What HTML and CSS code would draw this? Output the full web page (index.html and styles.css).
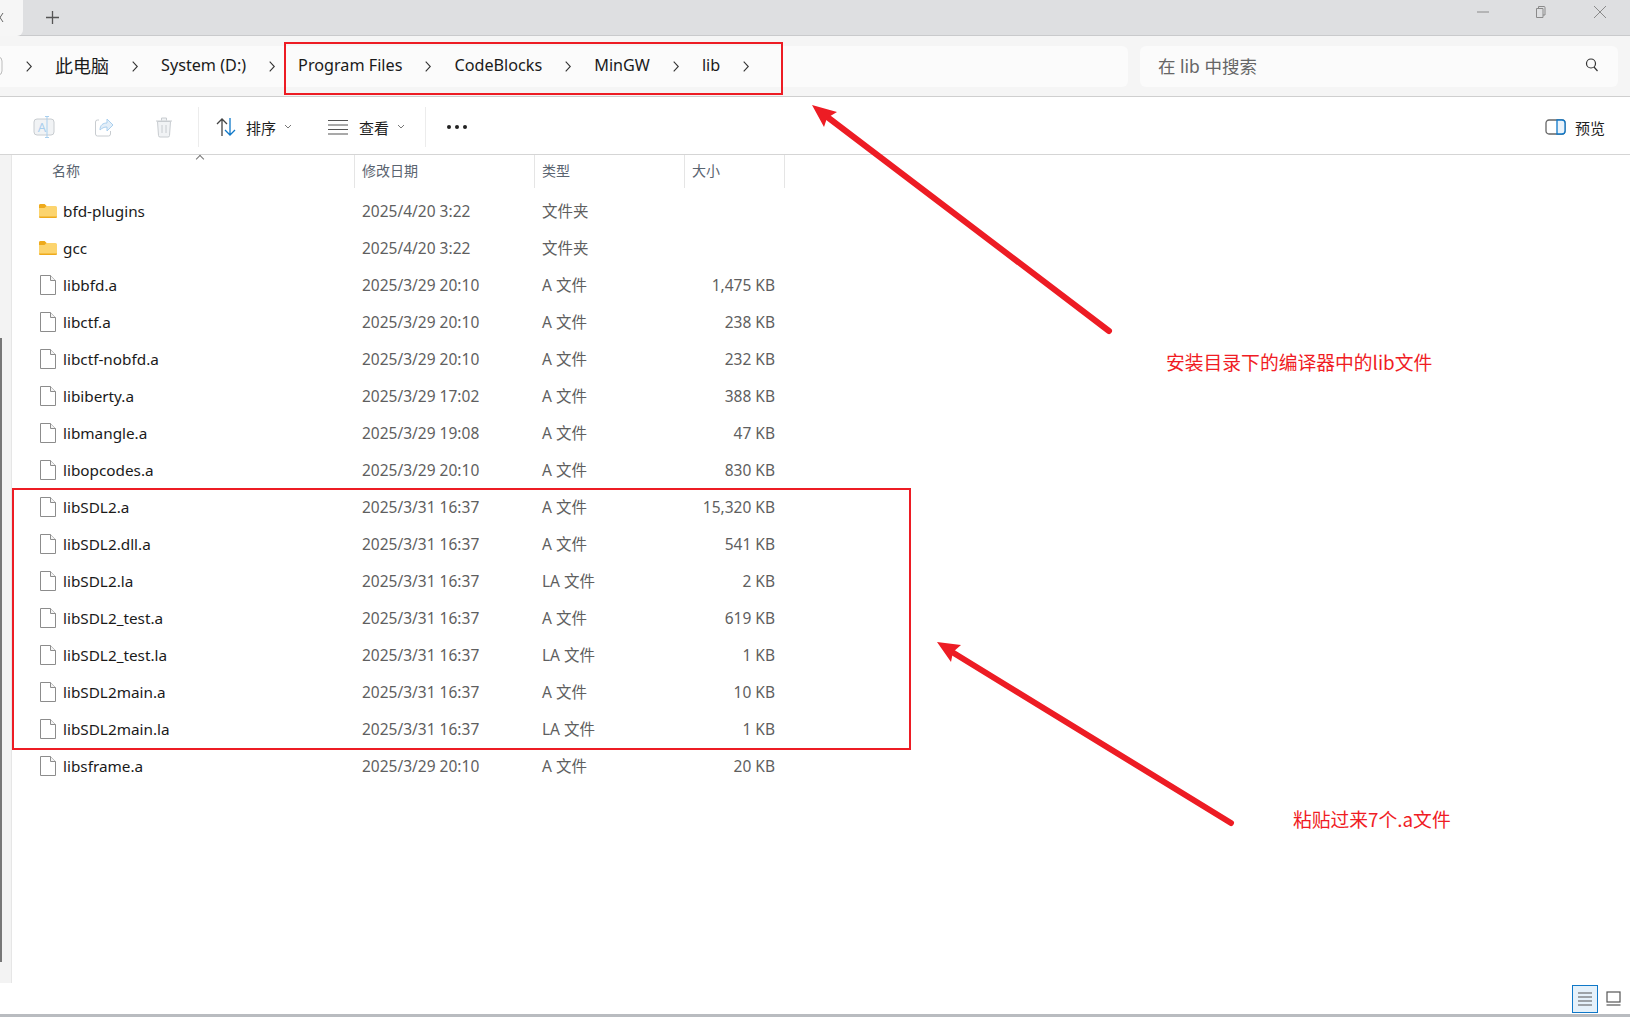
FILE: index.html
```html
<!DOCTYPE html>
<html lang="zh-CN">
<head>
    <meta charset="UTF-8">
    <title>lib</title>
    <link rel="stylesheet" href="styles.css">
</head>
<body>
<svg class="defs" width="0" height="0">
    <symbol id="chev" viewBox="0 0 6 11"><path d="M0.700 0.700l4.600 4.800-4.600 4.800" stroke="#333" stroke-width="1.100" fill="none"/></symbol>
    <symbol id="file" viewBox="0 0 16 20"><path d="M0.500 0.500h10l5 5v14h-15z" fill="#fff" stroke="#8c8c8c"/><path d="M10.500 0.500v5h5" fill="#f4f4f4" stroke="#8c8c8c"/></symbol>
    <symbol id="folder" viewBox="0 0 18 14"><path d="M0 1.500a1.500 1.500 0 0 1 1.500-1.500h4l2 2h9a1.500 1.500 0 0 1 1.500 1.500v9a1.500 1.500 0 0 1-1.500 1.500h-15a1.500 1.500 0 0 1-1.500-1.500z" fill="#fcd46e"/><path d="M0 1.500a1.500 1.500 0 0 1 1.500-1.500h4l2 2-2 2h-5.500z" fill="#eeaa1c"/><path d="M0 12.500h18a1.500 1.500 0 0 1-1.500 1.500h-15a1.500 1.500 0 0 1-1.500-1.500z" fill="#eeaa1c"/></symbol>
    <symbol id="caret" viewBox="0 0 8 6"><path d="M1 1l3 3 3-3" stroke="#777" fill="none"/></symbol>
</svg>
<div class="window">
    <!-- 标题栏 -->
    <div class="titlebar">
        <div class="tab-stub"><svg width="4" height="12" viewBox="0 0 4 12"><path d="M-3 1l6 9M3 1l-6 9" stroke="#666" fill="none"/></svg></div>
        <svg class="tab-add" width="13" height="13" viewBox="0 0 13 13"><path d="M6.500 0v13M0 6.500h13" stroke="#555" stroke-width="1.300" fill="none"/></svg>
        <div class="win-btns">
            <svg class="win-min" width="14" height="14" viewBox="0 0 14 14"><path d="M1 7h12" stroke="#8a8a8a" fill="none"/></svg>
            <svg width="14" height="14" viewBox="0 0 14 14"><path d="M3.500 3.500h6.500v9h-6.500z M5.500 3.500v-2h5.500a1 1 0 0 1 1 1v7.500h-2" stroke="#8a8a8a" fill="none"/></svg>
            <svg width="14" height="14" viewBox="0 0 14 14"><path d="M1 1l12 12M13 1l-12 12" stroke="#8a8a8a" fill="none"/></svg>
        </div>
    </div>

    <!-- 地址栏 -->
    <div class="addressrow">
        <div class="crumbs">
            <svg class="crumb-edge" width="3" height="20" viewBox="0 0 3 20"><path d="M-6 1h4a4 4 0 0 1 4 4v10a4 4 0 0 1-4 4h-4" stroke="#bdbdbd" fill="none"/></svg>
            <svg class="sep"><use href="#chev"/></svg><span class="crumb-cjk">此电脑</span>
            <svg class="sep"><use href="#chev"/></svg><span>System (D:)</span>
            <svg class="sep"><use href="#chev"/></svg><span>Program Files</span>
            <svg class="sep"><use href="#chev"/></svg><span>CodeBlocks</span>
            <svg class="sep"><use href="#chev"/></svg><span>MinGW</span>
            <svg class="sep"><use href="#chev"/></svg><span>lib</span>
            <svg class="sep"><use href="#chev"/></svg>
        </div>
        <div class="search">
            <span>在 lib 中搜索</span>
            <svg width="16" height="16" viewBox="0 0 16 16"><circle cx="7" cy="6.500" r="4.500" stroke="#333" fill="none" stroke-width="1.200"/><path d="M10 10l3.500 4" stroke="#333" stroke-width="1.200" fill="none"/></svg>
        </div>
    </div>

    <!-- 工具栏 -->
    <div class="toolbar">
        <div class="tool-group first">
            <svg width="24" height="24" viewBox="0 0 24 24"><rect x="2" y="4" width="20" height="16" rx="3" fill="#f1f3f5" stroke="#c8ccd0"/><text x="10" y="17" class="icon-a">A</text><path d="M15 1.500v21M13 1.500h4M13 22.500h4" stroke="#a9cfee" fill="none"/></svg>
            <svg width="24" height="24" viewBox="0 0 24 24"><path d="M7 5h-1.500a2 2 0 0 0-2 2v12a2 2 0 0 0 2 2h11a2 2 0 0 0 2-2v-3" stroke="#c8ccd0" fill="none"/><path d="M8 15c0-5 3-7 7-7v-4l6 6-6 6v-4c-3 0-5 1-7 3z" fill="#e3eef8" stroke="#a9cfee"/></svg>
            <svg width="24" height="24" viewBox="0 0 24 24"><path d="M5.500 6.500l1 14a1.500 1.500 0 0 0 1.500 1.500h8a1.500 1.500 0 0 0 1.500-1.500l1-14zM4 6h16M9.500 5.500v-2.500h5v2.500M10 10v8M14 10v8" fill="#f1f3f5" stroke="#c8ccd0"/></svg>
        </div>
        <div class="tool-group">
            <svg class="sort-icon" width="24" height="24" viewBox="0 0 24 24"><path d="M8 21v-17M3 9l5-5 5 5" stroke="#444" stroke-width="1.300" fill="none"/><path d="M16 3v17M11 15l5 5 5-5" stroke="#0f78c8" stroke-width="1.300" fill="none"/></svg>
            <span class="tool-label">排序</span>
            <svg class="caret"><use href="#caret"/></svg>
            <svg class="view-icon" width="20" height="16" viewBox="0 0 20 16"><path d="M0 1.500h20M0 6h20M0 10.500h20M0 15h20" stroke="#555" stroke-width="1.200" fill="none"/></svg>
            <span class="tool-label">查看</span>
            <svg class="caret"><use href="#caret"/></svg>
        </div>
        <div class="dots"><i></i><i></i><i></i></div>
        <div class="preview">
            <svg width="21" height="16" viewBox="0 0 21 16"><rect x="1" y="1" width="19" height="14" rx="3" fill="none" stroke="#666" stroke-width="1.300"/><path d="M12 1h5a3 3 0 0 1 3 3v8a3 3 0 0 1-3 3h-5z" fill="#eaf3fb" stroke="#0f78c8" stroke-width="1.300"/></svg>
            <span class="tool-label">预览</span>
        </div>
    </div>

    <!-- 内容区 -->
    <div class="content">
        <div class="side"><div class="side-thumb"></div></div>
        <div class="list">
            <div class="head">
                <div class="col">名称<span class="sort-caret"></span></div>
                <div class="col">修改日期</div>
                <div class="col">类型</div>
                <div class="col">大小</div>
            </div>
            <div class="row"><div class="name"><svg class="folder"><use href="#folder"/></svg>bfd-plugins</div><div class="date">2025/4/20 3:22</div><div class="type">文件夹</div><div class="size"></div></div>
            <div class="row"><div class="name"><svg class="folder"><use href="#folder"/></svg>gcc</div><div class="date">2025/4/20 3:22</div><div class="type">文件夹</div><div class="size"></div></div>
            <div class="row"><div class="name"><svg class="file"><use href="#file"/></svg>libbfd.a</div><div class="date">2025/3/29 20:10</div><div class="type">A 文件</div><div class="size">1,475 KB</div></div>
            <div class="row"><div class="name"><svg class="file"><use href="#file"/></svg>libctf.a</div><div class="date">2025/3/29 20:10</div><div class="type">A 文件</div><div class="size">238 KB</div></div>
            <div class="row"><div class="name"><svg class="file"><use href="#file"/></svg>libctf-nobfd.a</div><div class="date">2025/3/29 20:10</div><div class="type">A 文件</div><div class="size">232 KB</div></div>
            <div class="row"><div class="name"><svg class="file"><use href="#file"/></svg>libiberty.a</div><div class="date">2025/3/29 17:02</div><div class="type">A 文件</div><div class="size">388 KB</div></div>
            <div class="row"><div class="name"><svg class="file"><use href="#file"/></svg>libmangle.a</div><div class="date">2025/3/29 19:08</div><div class="type">A 文件</div><div class="size">47 KB</div></div>
            <div class="row"><div class="name"><svg class="file"><use href="#file"/></svg>libopcodes.a</div><div class="date">2025/3/29 20:10</div><div class="type">A 文件</div><div class="size">830 KB</div></div>
            <div class="row"><div class="name"><svg class="file"><use href="#file"/></svg>libSDL2.a</div><div class="date">2025/3/31 16:37</div><div class="type">A 文件</div><div class="size">15,320 KB</div></div>
            <div class="row"><div class="name"><svg class="file"><use href="#file"/></svg>libSDL2.dll.a</div><div class="date">2025/3/31 16:37</div><div class="type">A 文件</div><div class="size">541 KB</div></div>
            <div class="row"><div class="name"><svg class="file"><use href="#file"/></svg>libSDL2.la</div><div class="date">2025/3/31 16:37</div><div class="type">LA 文件</div><div class="size">2 KB</div></div>
            <div class="row"><div class="name"><svg class="file"><use href="#file"/></svg>libSDL2_test.a</div><div class="date">2025/3/31 16:37</div><div class="type">A 文件</div><div class="size">619 KB</div></div>
            <div class="row"><div class="name"><svg class="file"><use href="#file"/></svg>libSDL2_test.la</div><div class="date">2025/3/31 16:37</div><div class="type">LA 文件</div><div class="size">1 KB</div></div>
            <div class="row"><div class="name"><svg class="file"><use href="#file"/></svg>libSDL2main.a</div><div class="date">2025/3/31 16:37</div><div class="type">A 文件</div><div class="size">10 KB</div></div>
            <div class="row"><div class="name"><svg class="file"><use href="#file"/></svg>libSDL2main.la</div><div class="date">2025/3/31 16:37</div><div class="type">LA 文件</div><div class="size">1 KB</div></div>
            <div class="row"><div class="name"><svg class="file"><use href="#file"/></svg>libsframe.a</div><div class="date">2025/3/29 20:10</div><div class="type">A 文件</div><div class="size">20 KB</div></div>
        </div>
    </div>

    <!-- 状态栏 -->
    <div class="statusbar">
        <div class="view-btn active"><svg width="16" height="14" viewBox="0 0 16 14"><path d="M1 1h14M1 5h14M1 9h14M1 13h14" stroke="#555" stroke-width="1.200" fill="none"/></svg></div>
        <div class="view-btn"><svg width="15" height="15" viewBox="0 0 15 15"><rect x="1" y="1" width="13" height="10" fill="none" stroke="#555" stroke-width="1.200"/><path d="M0.500 14h14" stroke="#555" stroke-width="1.200" fill="none"/></svg></div>
    </div>
</div>

<!-- 截图上的红色标注 -->
<div class="mark mark-path"></div>
<div class="mark mark-files"></div>
<svg class="arrows" width="1630" height="1017" viewBox="0 0 1630 1017">
    <path d="M1109 331L826 116" stroke="#ed1c24" stroke-width="6" stroke-linecap="round" fill="none"/>
    <path d="M812 105L837 112L827 118L824 127z" fill="#ed1c24"/>
    <path d="M1231 823L952 652" stroke="#ed1c24" stroke-width="6" stroke-linecap="round" fill="none"/>
    <path d="M937 642L961 645L953 652L951 662z" fill="#ed1c24"/>
</svg>
<div class="note note-path">安装目录下的编译器中的lib文件</div>
<div class="note note-files">粘贴过来7个.a文件</div>
</body>
</html>
```

FILE: styles.css
```css
*{
    margin: 0;
    padding: 0;
    box-sizing: border-box;
}
html,body{
    width: 100%;
    height: 100%;
    overflow: hidden;
    background: #fff;
}
body{
    font-family: "Noto Sans", "Noto Sans CJK SC", sans-serif;
    color: #1a1a1a;
    font-size: 15.5px;
}
.defs{
    position: absolute;
}
.window{
    height: 1017px;
    display: flex;
    flex-direction: column;
}
.titlebar{
    height: 36px;
    background: #dedfe1;
    border-bottom: 1px solid #c9cacc;
    display: flex;
    align-items: center;
}
.tab-stub{
    width: 23px;
    height: 36px;
    background: #f6f6f6;
    border-bottom-right-radius: 6px;
    display: flex;
    align-items: center;
}
.tab-add{
    margin-left: 23px;
}
.win-btns{
    margin-left: auto;
    display: flex;
    gap: 46px;
    padding-right: 23px;
    margin-top: -11px;
}
.win-min{
    margin-right: -3px;
}
.addressrow{
    height: 61px;
    background: #f5f5f5;
    border-bottom: 1px solid #cfcfcf;
    display: flex;
    align-items: center;
    gap: 12px;
    padding-right: 12px;
}
.crumbs{
    width: 1128px;
    height: 41px;
    background: #fbfbfb;
    border-radius: 0 6px 6px 0;
    display: flex;
    align-items: center;
    padding: 0 0 2px 0;
    font-size: 16.2px;
}
.crumb-edge{
    margin-top: 2px;
}
.crumb-cjk{
    font-size: 18px;
}
.sep{
    width: 6px;
    height: 11px;
    margin: 2px 23px 0;
}
.search{
    flex: 1;
    height: 41px;
    background: #fbfbfb;
    border-radius: 6px;
    display: flex;
    align-items: center;
    justify-content: space-between;
    padding: 0 18px 2px 18px;
    font-size: 17.5px;
    color: #666;
}
.toolbar{
    height: 58px;
    border-bottom: 1px solid #d5d5d5;
    display: flex;
    align-items: center;
    padding: 3px 25px 0 32px;
}
.tool-group{
    display: flex;
    align-items: center;
    height: 40px;
    border-right: 1px solid #ececec;
    padding-right: 20px;
}
.tool-group.first{
    gap: 36px;
    padding-right: 22px;
}
.sort-icon{
    margin-left: 15px;
    margin-right: 8px;
}
.view-icon{
    margin-left: 36px;
    margin-right: 11px;
}
.caret{
    width: 8px;
    height: 6px;
    margin-left: 8px;
}
.tool-label{
    font-size: 15px;
    color: #1f1f1f;
}
.dots{
    display: flex;
    gap: 4px;
    margin-left: 21px;
}
.dots i{
    width: 4px;
    height: 4px;
    border-radius: 50%;
    background: #222;
}
.preview{
    margin-left: auto;
    display: flex;
    align-items: center;
    gap: 9px;
}
.icon-a{
    font-size: 13px;
    text-anchor: middle;
    fill: #a9cfee;
}
.content{
    flex: 1;
    display: flex;
    min-height: 0;
}
.side{
    width: 12px;
    height: 828px;
    background: #f3f3f3;
    border-right: 1px solid #e6e6e6;
    padding-top: 183px;
}
.side-thumb{
    width: 2px;
    height: 624px;
    background: #777;
}
.list{
    flex: 1;
}
.head{
    height: 37px;
    display: grid;
    grid-template-columns: 343px 180px 150px 100px;
    color: #5a6470;
    font-size: 14px;
}
.col{
    position: relative;
    padding-left: 7px;
    border-right: 1px solid #e5e5e5;
    line-height: 32px;
    height: 33px;
}
.col:first-child{
    padding-left: 40px;
}
.sort-caret{
    position: absolute;
    left: 185px;
    top: 1px;
    width: 6px;
    height: 6px;
    border-left: 1px solid #777;
    border-top: 1px solid #777;
    transform: rotate(45deg);
}
.row{
    height: 37px;
    display: grid;
    grid-template-columns: 343px 180px 150px 100px;
    align-items: center;
    color: #5f5f5f;
}
.name{
    display: flex;
    align-items: center;
    padding-left: 27px;
    color: #1a1a1a;
    font-size: 15.3px;
}
.file{
    width: 16px;
    height: 20px;
    margin-left: 1px;
    margin-right: 7px;
}
.folder{
    width: 18px;
    height: 14px;
    margin-right: 6px;
}
.date,.type{
    padding-left: 7px;
}
.size{
    text-align: right;
    padding-right: 10px;
}
.statusbar{
    height: 34px;
    border-bottom: 3px solid #b9bcc0;
    display: flex;
    justify-content: flex-end;
    align-items: center;
    gap: 6px;
    padding-right: 8px;
}
.view-btn{
    width: 18px;
    height: 28px;
    display: flex;
    align-items: center;
    justify-content: center;
}
.view-btn.active{
    width: 26px;
    background: #e5f1fa;
    border: 1px solid #0f78c8;
}
.mark{
    position: absolute;
    border: 2px solid #ed1c24;
}
.mark-path{
    left: 284px;
    top: 42px;
    width: 499px;
    height: 53px;
}
.mark-files{
    left: 12px;
    top: 488px;
    width: 899px;
    height: 262px;
}
.arrows{
    position: absolute;
    left: 0;
    top: 0;
}
.note{
    position: absolute;
    color: #f01c24;
    font-size: 18.8px;
    line-height: 24px;
    font-family: "Noto Sans CJK SC", sans-serif;
}
.note-path{
    left: 1166px;
    top: 350px;
}
.note-files{
    left: 1293px;
    top: 807px;
}
```
